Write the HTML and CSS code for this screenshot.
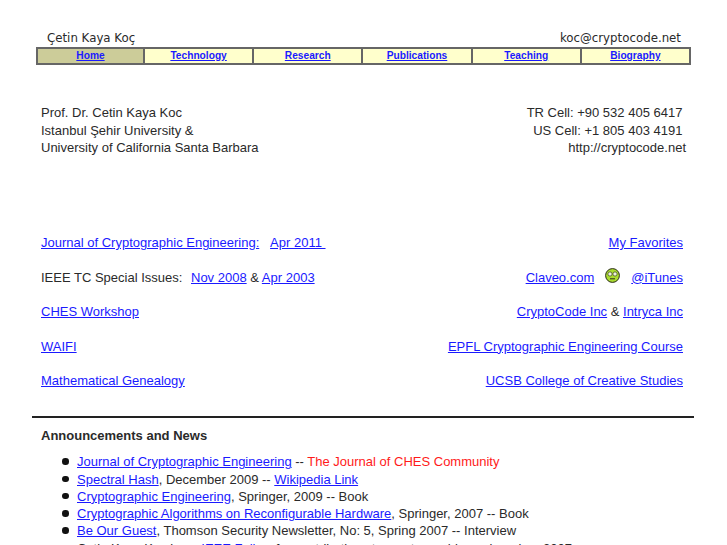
FILE: index.html
```html
<!DOCTYPE html>
<html lang="en">
<head>
    <meta charset="UTF-8">
    <title>Cetin Kaya Koc</title>
    <link rel="stylesheet" href="styles.css">
</head>
<body>
    <div class="page">
        <div class="masthead">
            <span>Çetin Kaya Koç</span>
            <span>koc@cryptocode.net</span>
        </div>
        <div class="nav">
            <a class="nav-item current" href="#">Home</a>
            <a class="nav-item" href="#">Technology</a>
            <a class="nav-item" href="#">Research</a>
            <a class="nav-item" href="#">Publications</a>
            <a class="nav-item" href="#">Teaching</a>
            <a class="nav-item" href="#">Biography</a>
        </div>
        <div class="contact">
            <div>
                Prof. Dr. Cetin Kaya Koc<br>
                Istanbul Şehir University &amp;<br>
                University of California Santa Barbara
            </div>
            <div class="contact-right">
                TR Cell: +90 532 405 6417&nbsp;<br>
                US Cell: +1 805 403 4191&nbsp;<br>
                http://cryptocode.net
            </div>
        </div>
        <div class="links">
            <div class="link-row">
                <span><a href="#">Journal of Cryptographic Engineering:</a>&nbsp;&nbsp;&nbsp;<a href="#">Apr 2011&nbsp;</a></span>
                <span><a href="#">My Favorites</a></span>
            </div>
            <div class="link-row">
                <span>IEEE TC Special Issues: <a class="issue-link" href="#">Nov 2008</a> &amp; <a href="#">Apr 2003</a></span>
                <span class="with-icon">
                    <a href="#">Claveo.com</a>
                    <svg class="smiley" width="15" height="15" viewBox="0 0 15 15">
                        <circle cx="7.5" cy="7.5" r="6.9" fill="#aadc30" stroke="#2a2a1a" stroke-width="1"/>
                        <circle cx="5" cy="6" r="2.1" fill="#eef3dc" stroke="#2a2a1a" stroke-width="0.6"/>
                        <circle cx="10" cy="6" r="2.1" fill="#eef3dc" stroke="#2a2a1a" stroke-width="0.6"/>
                        <path d="M5 10.8h5" stroke="#2a2a1a" stroke-width="1" fill="none"/>
                    </svg>
                    <a href="#">@iTunes</a>
                </span>
            </div>
            <div class="link-row">
                <span><a href="#">CHES Workshop</a></span>
                <span><a href="#">CryptoCode Inc</a> &amp; <a href="#">Intryca Inc</a></span>
            </div>
            <div class="link-row">
                <span><a href="#">WAIFI</a></span>
                <span><a href="#">EPFL Cryptographic Engineering Course</a></span>
            </div>
            <div class="link-row">
                <span><a href="#">Mathematical Genealogy</a></span>
                <span><a href="#">UCSB College of Creative Studies</a></span>
            </div>
        </div>
        <hr class="rule">
        <div class="news">
            <h2>Announcements and News</h2>
            <ul>
                <li><a href="#">Journal of Cryptographic Engineering</a> -- <span class="red">The Journal of CHES Community</span></li>
                <li><a href="#">Spectral Hash</a>, December 2009 -- <a href="#">Wikipedia Link</a></li>
                <li><a href="#">Cryptographic Engineering</a>, Springer, 2009 -- Book</li>
                <li><a href="#">Cryptographic Algorithms on Reconfigurable Hardware</a>, Springer, 2007 -- Book</li>
                <li><a href="#">Be Our Guest</a>, Thomson Security Newsletter, No: 5, Spring 2007 -- Interview</li>
                <li>Cetin Kaya Koc is an <a href="#">IEEE Fellow</a> for contributions to cryptographic engineering, 2007</li>
            </ul>
        </div>
    </div>
</body>
</html>
```

FILE: styles.css
```css
html, body {
    margin: 0;
    padding: 0;
    height: 545px;
    overflow: hidden;
}

body {
    font-family: "Liberation Sans", Arial, sans-serif;
    font-size: 13px;
    line-height: 17.25px;
    color: #2a2a2a;
    background-color: #fff;
}

a {
    color: #1a1aff;
}

.page {
    padding-top: 29px;
}

.masthead {
    display: flex;
    justify-content: space-between;
    margin: 0 46px 0 47px;
    font-family: "DejaVu Sans", sans-serif;
    font-size: 11.8px;
    line-height: 18px;
}

.nav {
    display: grid;
    grid-template-columns: 105px repeat(5, 1fr);
    margin: 0 36px;
    border: 2px solid #666;
    background-color: #ffffcc;
}

.nav-item {
    text-align: center;
    font-size: 10.2px;
    line-height: 14px;
    font-weight: bold;
    border-left: 2px solid #666;
}

.nav-item:first-child {
    border-left: none;
}

.current {
    background-color: #cccc99;
}

.contact {
    display: flex;
    justify-content: space-between;
    margin: 39.3px 41px 0 41px;
}

.contact-right {
    text-align: right;
}

.links {
    display: flex;
    flex-direction: column;
    gap: 17.25px;
    margin: 78px 44px 0 41px;
}

.link-row {
    display: flex;
    justify-content: space-between;
}

.issue-link {
    margin-left: 5px;
}

.with-icon {
    display: flex;
    align-items: center;
    gap: 11px;
}

.smiley {
    margin-top: -3px;
}

.rule {
    margin: 27px 33px 0 32px;
    border: none;
    height: 2px;
    background-color: #222;
}

.news {
    margin: 9px 41px 0 41px;
}

.news h2 {
    margin: 0;
    font-size: 13px;
    line-height: 17px;
    font-weight: bold;
}

.news ul {
    margin: 9px 0 0 0;
    padding-left: 36px;
    list-style: none;
}

.news li::before {
    content: "";
    display: inline-block;
    width: 6.5px;
    height: 6.5px;
    margin-left: -15px;
    margin-right: 8.5px;
    border-radius: 50%;
    background-color: #111;
    vertical-align: 1.5px;
}

.red {
    color: #ff1a1a;
}
```
